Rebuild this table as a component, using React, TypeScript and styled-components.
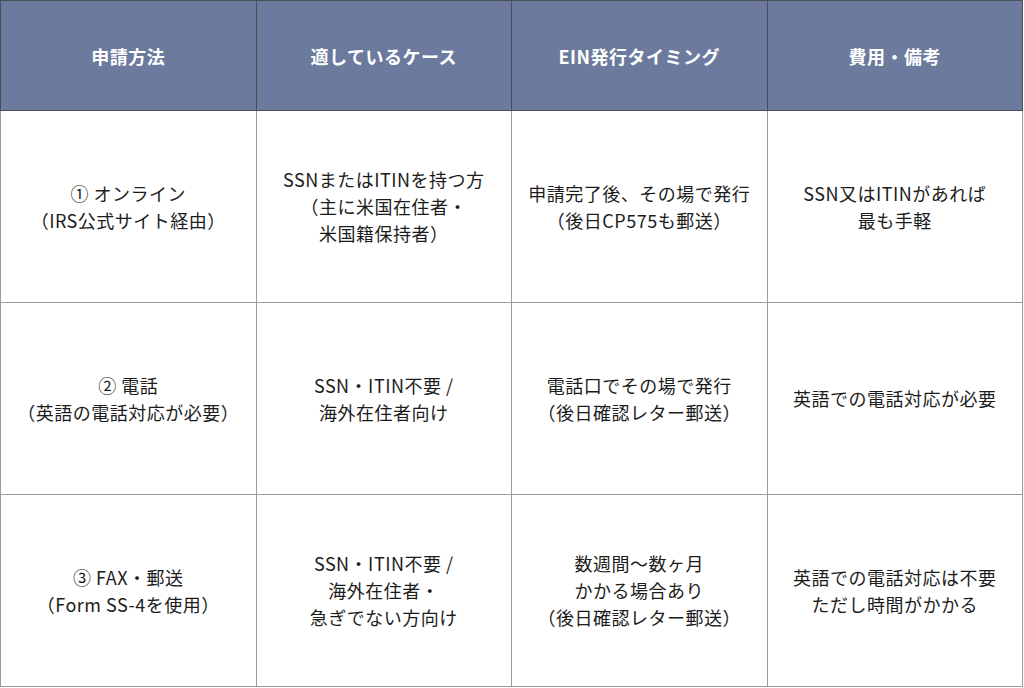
import styled, { createGlobalStyle } from 'styled-components';

const GlobalStyle = createGlobalStyle`
    html, body {
        margin: 0;
        padding: 0;
        background: #ffffff;
    }
    body {
        font-family: "Noto Sans CJK JP", "Noto Sans", sans-serif;
    }
`;

const Table = styled.table`
    width: 1023px;
    border-collapse: collapse;
    table-layout: fixed;
    border: 1px solid #444;
`;

const HeadCell = styled.th`
    height: 109px;
    background: #6b7a9d;
    color: #ffffff;
    font-size: 18px;
    font-weight: 700;
    letter-spacing: 0.5px;
    text-align: center;
    vertical-align: middle;
    border: 1px solid #4b4f58;
    padding: 0 8px;
`;

const Cell = styled.td`
    height: 191px;
    color: #1c1c1c;
    font-size: 18px;
    line-height: 27px;
    letter-spacing: 0.5px;
    text-align: center;
    vertical-align: middle;
    border: 1px solid #9a9a9a;
    padding: 0 8px;
`;

const headers = ['申請方法', '適しているケース', 'EIN発行タイミング', '費用・備考'];

const rows: string[][][] = [
    [
        ['① オンライン', '（IRS公式サイト経由）'],
        ['SSNまたはITINを持つ方', '（主に米国在住者・', '米国籍保持者）'],
        ['申請完了後、その場で発行', '（後日CP575も郵送）'],
        ['SSN又はITINがあれば', '最も手軽'],
    ],
    [
        ['② 電話', '（英語の電話対応が必要）'],
        ['SSN・ITIN不要 /', '海外在住者向け'],
        ['電話口でその場で発行', '（後日確認レター郵送）'],
        ['英語での電話対応が必要'],
    ],
    [
        ['③ FAX・郵送', '（Form SS-4を使用）'],
        ['SSN・ITIN不要 /', '海外在住者・', '急ぎでない方向け'],
        ['数週間〜数ヶ月', 'かかる場合あり', '（後日確認レター郵送）'],
        ['英語での電話対応は不要', 'ただし時間がかかる'],
    ],
];

const App = () => (
    <>
        <GlobalStyle />
        <Table>
            <thead>
                <tr>
                    {headers.map(h => <HeadCell key={h}>{h}</HeadCell>)}
                </tr>
            </thead>
            <tbody>
                {rows.map((row, i) => (
                    <tr key={i}>
                        {row.map((lines, j) => (
                            <Cell key={j}>
                                {lines.map((line, k) => (
                                    <div key={k}>{line}</div>
                                ))}
                            </Cell>
                        ))}
                    </tr>
                ))}
            </tbody>
        </Table>
    </>
);

export default App;
